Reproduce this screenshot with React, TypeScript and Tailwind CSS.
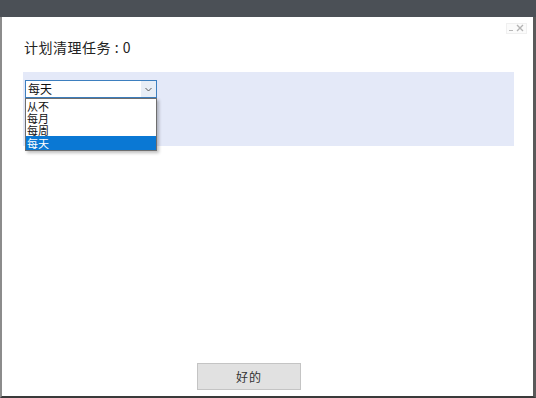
import React from "react";

const cjk = { fontFamily: '"Noto Sans CJK SC", "Noto Sans", sans-serif' };

function WindowControls() {
    return (
        <div className="flex justify-end pr-[6px] pt-[6px] h-[18px]">
            <div className="flex items-end gap-[3px] px-[2px] h-[11px] border border-[#f0f0f0] bg-[#fbfbfb]">
                <span className="w-[4px] h-[1px] bg-[#b8b8b8] mb-[2px]" />
                <svg width="8" height="8" viewBox="0 0 8 8" className="mb-[1px]">
                    <path d="M1 1 L7 7 M7 1 L1 7" stroke="#b4b4b4" strokeWidth="1.4" />
                </svg>
            </div>
        </div>
    );
}

function FrequencySelect() {
    const options = ["从不", "每月", "每周"];
    return (
        <div className="relative w-[132px]">
            {/* Closed box */}
            <div className="h-[18px] border border-[#3d7fbf] bg-white flex items-center">
                <span className="flex-1 pl-[2px] text-[12px] leading-[16px] text-[#111]">每天</span>
                <div className="w-[15px] h-full bg-[#e8eef6] flex items-center justify-center">
                    <svg width="7" height="5" viewBox="0 0 7 5">
                        <path d="M0.5 1 L3.5 4 L6.5 1" fill="none" stroke="#5a5a5a" strokeWidth="1" />
                    </svg>
                </div>
            </div>

            {/* Open list */}
            <div className="absolute left-0 top-[18px] w-[132px] border border-[#6e6e6e] bg-white pt-[1px] shadow-[2px_2px_3px_rgba(0,0,0,0.25)] z-10">
                {options.map((opt) => (
                    <div key={opt} className="h-[12px] flex items-center pl-[1px] text-[11px] leading-none text-[#111]">
                        {opt}
                    </div>
                ))}
                <div className="h-[14px] flex items-center pl-[1px] text-[11px] leading-none text-white bg-[#0a78d4]">每天</div>
            </div>
        </div>
    );
}

export default function App() {
    return (
        <div className="w-[536px] h-[398px] flex flex-col bg-white overflow-hidden" style={cjk}>
            {/* Title bar */}
            <div className="h-[17px] bg-[#4b5056] shrink-0" />

            <div className="flex-1 flex flex-col border-l-2 border-l-[#8c8c8c] border-r-[3px] border-r-[#5a5a5a] border-b-2 border-b-[#3a3a3a]">
                <WindowControls />

                <div className="ml-[22px] mt-[2px] h-[20px] text-[14px] leading-[20px] text-[#222] tracking-[0.5px]">
                    计划清理任务 : 0
                </div>

                <div className="ml-[21px] mt-[15px] w-[491px] h-[74px] bg-[#e4e9f8] pl-[2px] pt-[8px]">
                    <FrequencySelect />
                </div>

                <div className="flex-1" />

                <div className="pl-[195px] pb-[6px]">
                    <button className="w-[104px] h-[27px] bg-[#e1e1e1] border border-[#c4c4c4] text-[12px] text-[#333] tracking-[1px]">
                        好的
                    </button>
                </div>
            </div>
        </div>
    );
}
